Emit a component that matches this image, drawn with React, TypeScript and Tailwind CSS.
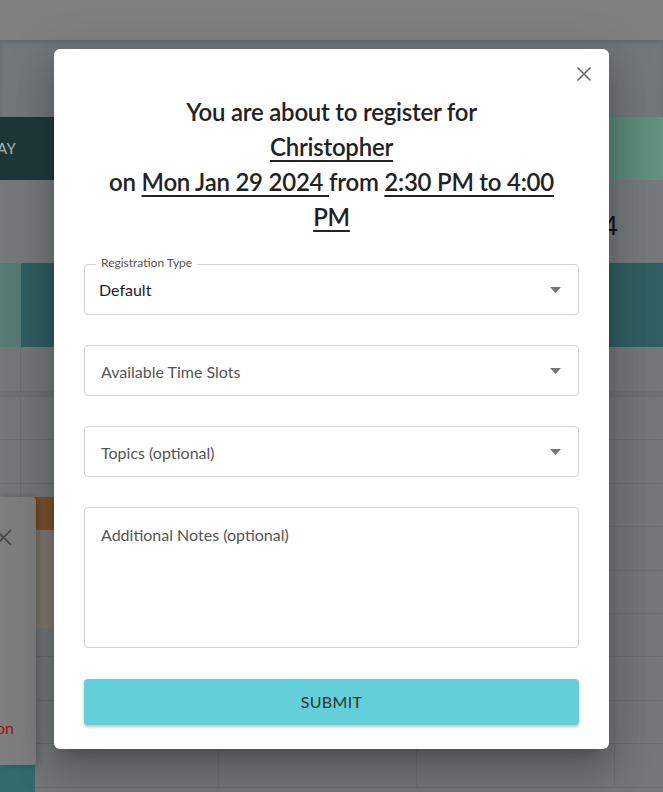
import React from 'react';

const gridRows = Array.from({ length: 9 });

function Caret() {
  return (
    <svg width="11" height="6" viewBox="0 0 11 6" className="shrink-0">
      <path d="M0 0 L11 0 L5.5 6 Z" fill="#757575" />
    </svg>
  );
}

function SelectField({ label, value }: { label: string; value?: string }) {
  return (
    <div className="relative flex h-[51px] items-center justify-between rounded-[4px] border border-[#d3d3d3] pl-[14px] pr-[17px]">
      {value ? (
        <>
          <span className="absolute -top-[10px] left-[11px] bg-white px-[5px] text-[12px] leading-[15px] text-[#555]">
            {label}
          </span>
          <span className="text-[16px] text-[#222]">{value}</span>
        </>
      ) : (
        <span className="pl-[2px] pt-[2px] text-[16px] text-[#555]">{label}</span>
      )}
      <Caret />
    </div>
  );
}

export default function App() {
  return (
    <div className="relative h-[792px] w-[663px] overflow-hidden font-['Lato',sans-serif]">
      {/* dimmed calendar page behind */}
      <div className="flex h-full flex-col bg-[#747778]">
        <div className="h-[40px] bg-[#808080]" />
        <div className="h-[77px] bg-[#72777a] shadow-[inset_0_3px_4px_rgba(0,0,0,0.12)]" />
        <div className="flex h-[63px] items-center bg-gradient-to-r from-[#1c3638] via-[#2f5656] to-[#62927f] shadow-[0_2px_3px_rgba(0,0,0,0.2)]">
          <span className="-ml-[3px] text-[15px] tracking-wide text-[#a9b3b2]">AY</span>
        </div>
        <div className="flex h-[83px] items-center justify-end bg-[#75797a] pr-[45px] pt-[10px]">
          <span className="font-['Liberation_Sans',sans-serif] text-[27px] text-[#151515]">4</span>
        </div>
        <div className="flex h-[84px]">
          <div className="w-[21px] bg-[#577b74]" />
          <div className="flex-1 bg-[#2f5f62]" />
        </div>
        <div className="grid h-[50px] grid-cols-[21px_198px_198px_198px_1fr] border-b-[6px] border-[#6d7172]">
          <div className="border-r border-[#6a6e6e]" />
          <div className="border-r border-[#6a6e6e]" />
          <div className="border-r border-[#6a6e6e]" />
          <div className="border-r border-[#6a6e6e]" />
          <div />
        </div>
        {gridRows.map((_, i) => (
          <div
            key={i}
            className="grid h-[43.4px] shrink-0 grid-cols-[21px_198px_198px_198px_1fr] border-b border-[#6a6e6e]"
          >
            <div className="border-r border-[#6a6e6e]" />
            <div className="border-r border-[#6a6e6e]" />
            <div className="border-r border-[#6a6e6e]" />
            <div className="border-r border-[#6a6e6e]" />
            <div />
          </div>
        ))}
      </div>

      {/* calendar events */}
      <div className="absolute left-[22px] top-[497px] flex h-[131px] w-[190px] flex-col">
        <div className="h-[33px] bg-[#7b5231]" />
        <div className="flex-1 bg-[#7e7a70]" />
      </div>
      <div className="absolute left-0 top-[765px] h-[27px] w-[35px] bg-[#356a6c]" />

      {/* other popup at left edge */}
      <div className="absolute left-0 top-[497px] flex h-[268px] w-[36px] flex-col justify-between rounded-r-[4px] bg-[#7e7e7e] pb-[25px] pt-[32px] shadow-[2px_0_6px_rgba(0,0,0,0.25)]">
        <svg width="13" height="17" viewBox="0 0 13 17">
          <path d="M-4 1 L11 16 M11 1 L-4 16" stroke="#444" strokeWidth="1.6" />
        </svg>
        <span className="-ml-[4px] text-[16px] text-[#9c1414]">on</span>
      </div>

      {/* modal */}
      <div className="absolute left-[54px] top-[49px] flex h-[700px] w-[555px] flex-col rounded-[6px] bg-white px-[30px] pt-[45px] shadow-[0_11px_15px_-7px_rgba(0,0,0,0.2),0_24px_38px_3px_rgba(0,0,0,0.14),0_9px_46px_8px_rgba(0,0,0,0.12)]">
        <button className="absolute right-[17px] top-[17px]">
          <svg width="16" height="16" viewBox="0 0 16 16">
            <path d="M1.5 1.5 L14.5 14.5 M14.5 1.5 L1.5 14.5" stroke="#666" strokeWidth="1.6" />
          </svg>
        </button>

        <h2 className="text-center font-['Lato',sans-serif] text-[24px] font-semibold leading-[35px] tracking-[-0.01em] text-[#222]">
          You are about to register for
          <br />
          <span className="underline decoration-[2px] underline-offset-[4px]">Christopher</span>
          <br />
          on <span className="underline decoration-[2px] underline-offset-[4px]">Mon Jan 29 2024 </span>
          from <span className="underline decoration-[2px] underline-offset-[4px]">2:30 PM to 4:00</span>
          <br />
          <span className="underline decoration-[2px] underline-offset-[4px]">PM</span>
        </h2>

        <div className="mt-[30px] flex flex-col gap-[30px]">
          <SelectField label="Registration Type" value="Default" />
          <SelectField label="Available Time Slots" />
          <SelectField label="Topics (optional)" />
          <div className="h-[141px] rounded-[4px] border border-[#d3d3d3] pl-[16px] pt-[15px]">
            <span className="text-[16px] text-[#555]">Additional Notes (optional)</span>
          </div>
        </div>

        <button className="mt-[31px] h-[46px] w-full rounded-[4px] bg-[#63cfd9] text-[16px] tracking-[0.02em] text-[#333] shadow-[0_2px_3px_rgba(0,0,0,0.25)]">
          SUBMIT
        </button>
      </div>
    </div>
  );
}
